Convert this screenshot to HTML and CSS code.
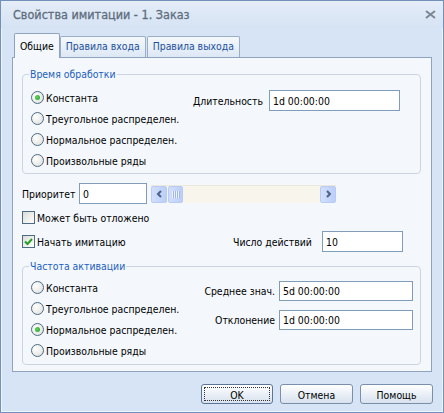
FILE: index.html
```html
<!doctype html>
<html lang="ru">

<head>
  <meta charset="UTF-8" />
  <title>Свойства имитации - 1. Заказ</title>
  <link rel="stylesheet" href="styles.css">
</head>

<body>
  <div class="window">
    <div class="titlebar">
      <span class="title">Свойства имитации - 1. Заказ</span>
      <svg class="close" width="11" height="9" viewBox="0 0 11 9">
        <path d="M1 1L10 8M10 1L1 8" />
      </svg>
    </div>

    <div class="tabs">
      <div class="tab active">Общие</div>
      <div class="tab">Правила входа</div>
      <div class="tab">Правила выхода</div>
    </div>

    <div class="panel">
      <fieldset class="group group-time">
        <legend>Время обработки</legend>
        <div class="group-body">
          <div class="options">
            <div class="option"><span class="radio checked"></span>Константа</div>
            <div class="option"><span class="radio"></span>Треугольное распределен.</div>
            <div class="option"><span class="radio"></span>Нормальное распределен.</div>
            <div class="option"><span class="radio"></span>Произвольные ряды</div>
          </div>
          <div class="fields">
            <span class="field-label">Длительность</span>
            <input class="input" type="text" value="1d 00:00:00">
          </div>
        </div>
      </fieldset>

      <div class="row priority">
        <span class="priority-label">Приоритет</span>
        <input class="input input-priority" type="text" value="0">
        <div class="scrollbar">
          <span class="scroll-btn">
            <svg width="7" height="8" viewBox="0 0 7 8"><path d="M5 1L2 4L5 7" /></svg>
          </span>
          <span class="scroll-thumb"><i></i><i></i><i></i><i></i></span>
          <span class="scroll-track"></span>
          <span class="scroll-btn">
            <svg width="7" height="8" viewBox="0 0 7 8"><path d="M2 1L5 4L2 7" /></svg>
          </span>
        </div>
      </div>

      <div class="row">
        <span class="checkbox"></span>Может быть отложено
      </div>
      <div class="row row-start">
        <span class="checkbox checked">
          <svg width="11" height="11" viewBox="0 0 11 11"><path d="M2 5.5L4.5 8L9 3" /></svg>
        </span>
        <span class="row-grow">Начать имитацию</span>
        <span class="count-label">Число действий</span>
        <input class="input input-count" type="text" value="10">
      </div>

      <fieldset class="group group-freq">
        <legend>Частота активации</legend>
        <div class="group-body">
          <div class="options">
            <div class="option"><span class="radio"></span>Константа</div>
            <div class="option"><span class="radio"></span>Треугольное распределен.</div>
            <div class="option"><span class="radio checked"></span>Нормальное распределен.</div>
            <div class="option"><span class="radio"></span>Произвольные ряды</div>
          </div>
          <div class="fields">
            <span class="field-label">Среднее знач.</span>
            <input class="input" type="text" value="5d 00:00:00">
            <span class="field-label">Отклонение</span>
            <input class="input" type="text" value="1d 00:00:00">
          </div>
        </div>
      </fieldset>
    </div>

    <div class="buttons">
      <button class="button default"><span>OK</span></button>
      <button class="button"><span>Отмена</span></button>
      <button class="button"><span>Помощь</span></button>
    </div>
  </div>
</body>

</html>
```

FILE: styles.css
```css
body {
  margin: 0;
  background-color: #ffffff;
  font-family: "DejaVu Sans Condensed", "Liberation Sans", sans-serif;
  font-size: 10.4px;
  color: #000;
}

.window {
  width: 444px;
  height: 413px;
  box-sizing: border-box;
  border: 1px solid #7391b8;
  background-color: #d6e4f5;
  box-shadow: inset 0 0 0 1px #eef4fb;
}

.titlebar {
  height: 27px;
  display: flex;
  align-items: center;
  justify-content: space-between;
  padding: 0 7px 0 12px;
  background: linear-gradient(#e4edf8, #d6e3f3);
}

.title {
  font-size: 12.5px;
  color: #5f6e80;
  -webkit-text-stroke: 0.3px #5f6e80;
}

.close path {
  stroke: #7b8797;
  stroke-width: 2;
  fill: none;
}

.tabs {
  display: flex;
  align-items: flex-end;
  margin-top: 5px;
  padding-left: 13px;
  height: 24px;
}

.tab {
  height: 20px;
  line-height: 19px;
  padding: 0 5px;
  margin-right: 1px;
  border: 1px solid #9aaec6;
  border-bottom: none;
  border-radius: 2px 2px 0 0;
  background: linear-gradient(#f4f8fc, #dde8f5);
  color: #1d4f9c;
}

.tab.active {
  position: relative;
  height: 24px;
  line-height: 24px;
  margin-right: 0;
  margin-bottom: -1px;
  background: #f4f8fd;
  color: #000;
  border-color: #8fa3bd;
}

.panel {
  margin: 0 11px;
  padding: 0 10px 6px 9px;
  border: 1px solid #8fa3bd;
  background-color: #f4f8fd;
}

.group {
  margin: 10px 0 0;
  padding: 0 0 2px 8px;
  border: 1px solid #cad5e1;
  border-radius: 4px;
}

.group legend {
  padding: 0 1px;
  margin-left: -2px;
  line-height: 13px;
  color: #1c5ebf;
}

.group-body {
  display: flex;
  padding-top: 6px;
}

.group-freq {
  margin-top: 8px;
  padding-bottom: 3px;
}

.group-freq .group-body {
  padding-top: 4px;
}

.options {
  width: 162px;
}

.group-freq .options {
  width: 169px;
}

.option {
  display: flex;
  align-items: center;
  height: 21px;
  white-space: nowrap;
}

.radio {
  width: 11px;
  height: 11px;
  margin-right: 2px;
  border: 1px solid #4d6a86;
  border-radius: 50%;
  background: radial-gradient(circle at 35% 35%, #ffffff, #dcdcd6);
  display: flex;
  align-items: center;
  justify-content: center;
}

.radio.checked::after {
  content: "";
  width: 5px;
  height: 5px;
  border-radius: 50%;
  background: radial-gradient(circle at 40% 40%, #5fd35f, #21a121);
}

.fields {
  display: grid;
  grid-template-columns: 76px 131px;
  align-items: center;
  row-gap: 9px;
  padding-top: 3px;
  align-self: flex-start;
}

.group-freq .fields {
  grid-template-columns: 75px 134px;
  column-gap: 4px;
  padding-top: 4px;
}

.group-freq .field-label {
  text-align: right;
}

.group-freq .input {
  height: 20px;
}

.input {
  box-sizing: border-box;
  height: 21px;
  margin: 0;
  padding: 0 3px;
  border: 1px solid #7f9db9;
  background: #fff;
  font: inherit;
  color: #000;
  outline: none;
}

.row {
  display: flex;
  align-items: center;
  height: 21px;
  margin-top: 3px;
}

.priority {
  margin-top: 9px;
}

.priority-label {
  width: 57px;
}

.input-priority {
  width: 68px;
  margin-right: 4px;
}

.scrollbar {
  display: flex;
  width: 185px;
  height: 18px;
  background: #f7f5ec;
  border-top: 1px solid #ece9dc;
  box-sizing: border-box;
}

.scroll-btn,
.scroll-thumb {
  box-sizing: border-box;
  width: 16px;
  height: 17px;
  border: 1px solid #b7cbf5;
  border-radius: 2px;
  background: linear-gradient(90deg, #d2defc, #bccff8);
  display: flex;
  align-items: center;
  justify-content: center;
}

.scroll-btn path {
  stroke: #4d6185;
  stroke-width: 2;
  fill: none;
}

.scroll-thumb {
  margin-left: 1px;
  width: 15px;
  gap: 1px;
}

.scroll-thumb i {
  width: 1px;
  height: 7px;
  background: #eef3fd;
  box-shadow: 1px 0 0 #9fb6e6;
}

.scroll-track {
  flex: 1;
}

.checkbox {
  box-sizing: border-box;
  width: 13px;
  height: 13px;
  margin-right: 2px;
  border: 1px solid #4d6a86;
  background: linear-gradient(135deg, #dcdcd6, #ffffff);
  display: flex;
  align-items: center;
  justify-content: center;
}

.checkbox path {
  stroke: #21a121;
  stroke-width: 2;
  fill: none;
}

.row-start {
  padding-right: 18px;
}

.row-grow {
  flex: 1;
}

.count-label {
  width: 89px;
}

.input-count {
  width: 81px;
}

.buttons {
  display: flex;
  justify-content: flex-end;
  gap: 7px;
  margin-top: 12px;
  padding-right: 10px;
}

.button {
  box-sizing: border-box;
  width: 73px;
  height: 20px;
  padding: 2px;
  border: 1px solid #7890ab;
  border-radius: 3px;
  background: linear-gradient(#ffffff, #e6edf5 60%, #d8e2ee);
  font: inherit;
  color: #000;
}

.button span {
  display: block;
  height: 100%;
  line-height: 14px;
  box-sizing: border-box;
  border: 1px dotted transparent;
}

.button.default {
  width: 72px;
  border-color: #5a7595;
}

.button.default span {
  border-color: #333;
}
```
